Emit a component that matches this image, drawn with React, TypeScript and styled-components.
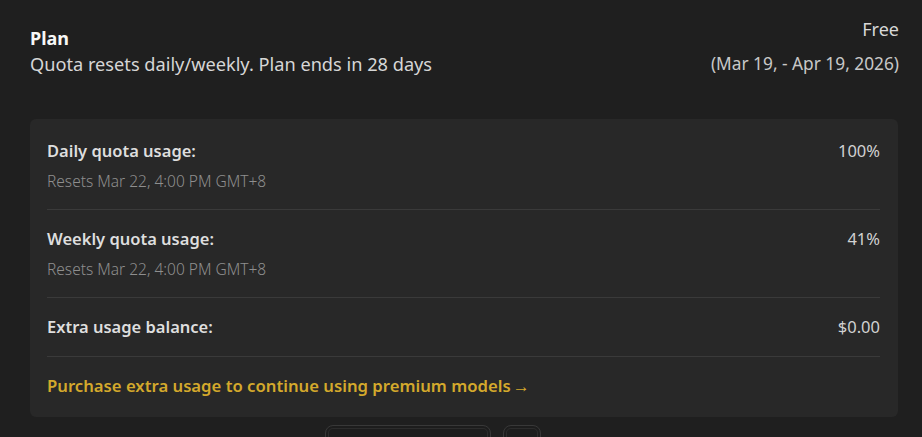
import React from 'react'
import styled, { createGlobalStyle } from 'styled-components'

const GlobalStyle = createGlobalStyle`
  html, body {
    margin: 0;
    padding: 0;
    background: #1f1f1f;
  }
  body {
    font-family: 'Noto Sans', 'Open Sans', sans-serif;
    -webkit-font-smoothing: antialiased;
  }
`

const Page = styled('div')`
  box-sizing: border-box;
  width: 922px;
  height: 437px;
  overflow: hidden;
  padding: 17px 23px 0 30px;
  background: #1f1f1f;
`

const Header = styled('header')`
  display: flex;
  justify-content: space-between;
  align-items: flex-start;
  margin-bottom: 43px;
`

const TitleBlock = styled('div')`
  display: flex;
  flex-direction: column;
  gap: 2px;
  padding-top: 9px;
`

const Title = styled('h1')`
  margin: 0;
  font-size: 18px;
  line-height: 24px;
  font-weight: 700;
  color: #f7f7f7;
`

const Subtitle = styled('p')`
  margin: 0;
  font-size: 18.2px;
  line-height: 24px;
  color: #d6d6d6;
`

const PlanBlock = styled('div')`
  display: flex;
  flex-direction: column;
  align-items: flex-end;
  gap: 11px;
`

const PlanName = styled('span')`
  font-size: 18px;
  line-height: 24px;
  color: #d8d8d8;
`

const PlanDates = styled('span')`
  font-size: 17.3px;
  line-height: 24px;
  color: #c8c8c8;
`

const Card = styled('section')`
  box-sizing: border-box;
  margin-right: 1px;
  padding: 3px 18px 2px 17px;
  background: #282828;
  border-radius: 6px;
`

const Row = styled('div')`
  display: flex;
  justify-content: space-between;
  align-items: flex-start;
  padding: 18px 0;
  & + & {
    border-top: 1px solid #3a3a3a;
  }
`

const RowText = styled('div')`
  display: flex;
  flex-direction: column;
  gap: 9px;
`

const Label = styled('span')`
  font-size: 16.5px;
  line-height: 22px;
  font-weight: 600;
  color: #dedede;
`

const Note = styled('span')`
  font-size: 15.5px;
  line-height: 20px;
  font-weight: 300;
  color: #8e8e8e;
`

const Value = styled('span')`
  font-size: 16.5px;
  line-height: 22px;
  color: #d2d2d2;
`

const Link = styled('a')`
  display: inline-flex;
  align-items: center;
  gap: 2px;
  font-size: 16.7px;
  line-height: 22px;
  font-weight: 600;
  color: #d4a92c;
  text-decoration: none;
  cursor: pointer;
`

const Arrow = styled('span')`
  font-size: 17px;
  font-weight: 400;
`

const Actions = styled('div')`
  display: flex;
  gap: 12px;
  margin-top: 8px;
  padding-left: 295px;
`

const GhostButton = styled('button')<{ $width: number }>`
  width: ${(p) => p.$width}px;
  height: 36px;
  border: 1px solid #383838;
  border-radius: 8px;
  background: #1d1d1d;
  box-shadow: inset 0 0 0 2px #1d1d1d, inset 0 0 0 3px #2c2c2c;
`

type Usage = {
  label: string
  note?: string
  value: string
}

const usages: Usage[] = [
  { label: 'Daily quota usage:', note: 'Resets Mar 22, 4:00 PM GMT+8', value: '100%' },
  { label: 'Weekly quota usage:', note: 'Resets Mar 22, 4:00 PM GMT+8', value: '41%' },
  { label: 'Extra usage balance:', value: '$0.00' },
]

export default function App() {
  return (
    <>
      <GlobalStyle />
      <Page>
        <Header>
          <TitleBlock>
            <Title>Plan</Title>
            <Subtitle>Quota resets daily/weekly. Plan ends in 28 days</Subtitle>
          </TitleBlock>
          <PlanBlock>
            <PlanName>Free</PlanName>
            <PlanDates>(Mar 19, - Apr 19, 2026)</PlanDates>
          </PlanBlock>
        </Header>

        <Card>
          {usages.map((u) => (
            <Row key={u.label}>
              <RowText>
                <Label>{u.label}</Label>
                {u.note ? <Note>{u.note}</Note> : null}
              </RowText>
              <Value>{u.value}</Value>
            </Row>
          ))}
          <Row>
            <Link>
              Purchase extra usage to continue using premium models
              <Arrow>→</Arrow>
            </Link>
          </Row>
        </Card>

        <Actions>
          <GhostButton $width={166} />
          <GhostButton $width={38} />
        </Actions>
      </Page>
    </>
  )
}
